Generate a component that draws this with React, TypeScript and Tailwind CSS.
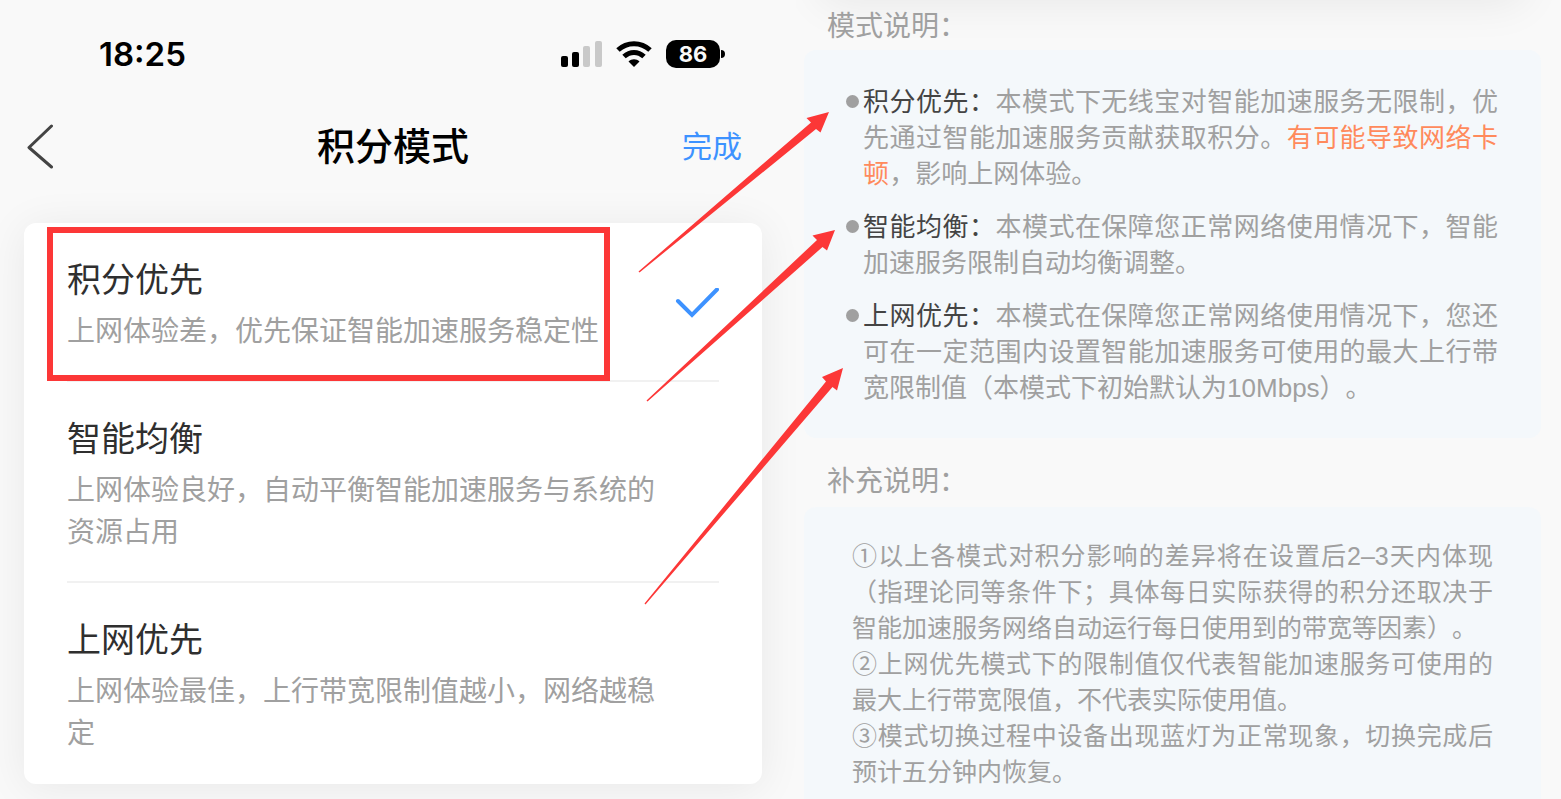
import { ReactNode, useState } from "react";

const MODES = [
  {
    id: "points",
    title: "积分优先",
    desc: "上网体验差，优先保证智能加速服务稳定性",
  },
  {
    id: "balanced",
    title: "智能均衡",
    desc: "上网体验良好，自动平衡智能加速服务与系统的资源占用",
  },
  {
    id: "network",
    title: "上网优先",
    desc: "上网体验最佳，上行带宽限制值越小，网络越稳定",
  },
];

const EXPLANATIONS: { title: string; body: ReactNode }[] = [
  {
    title: "积分优先",
    body: (
      <>
        本模式下无线宝对智能加速服务无限制，优先通过智能加速服务贡献获取积分。
        <span className="text-[#ff8a5c]">有可能导致网络卡顿</span>，影响上网体验。
      </>
    ),
  },
  {
    title: "智能均衡",
    body: "本模式在保障您正常网络使用情况下，智能加速服务限制自动均衡调整。",
  },
  {
    title: "上网优先",
    body: "本模式在保障您正常网络使用情况下，您还可在一定范围内设置智能加速服务可使用的最大上行带宽限制值（本模式下初始默认为10Mbps）。",
  },
];

const NOTES = [
  {
    mark: "①",
    text: "以上各模式对积分影响的差异将在设置后2–3天内体现（指理论同等条件下；具体每日实际获得的积分还取决于智能加速服务网络自动运行每日使用到的带宽等因素）。",
  },
  {
    mark: "②",
    text: "上网优先模式下的限制值仅代表智能加速服务可使用的最大上行带宽限值，不代表实际使用值。",
  },
  {
    mark: "③",
    text: "模式切换过程中设备出现蓝灯为正常现象，切换完成后预计五分钟内恢复。",
  },
];

function StatusBar() {
  return (
    <div className="flex h-[108px] items-center justify-between pr-[37px] pl-[75px]">
      <span className="text-[33px] leading-10 font-semibold text-black">18:25</span>
      <div className="flex items-center gap-[14px]">
        <svg width="41" height="26" viewBox="0 0 41 26" aria-hidden="true">
          <rect x="0" y="15" width="7" height="11" rx="2" fill="#000" />
          <rect x="11" y="11" width="7" height="15" rx="2" fill="#000" />
          <rect x="22" y="5" width="7" height="21" rx="2" fill="#c9c9c9" />
          <rect x="34" y="0" width="7" height="26" rx="2" fill="#c9c9c9" />
        </svg>
        <svg width="36" height="26" viewBox="0 0 36 26" fill="none" stroke="#000" aria-hidden="true">
          <path d="M2 9C11 0.500 25 0.500 34 9" strokeWidth="5" />
          <path d="M8 15.500C14 10 22 10 28 15.500" strokeWidth="5" />
          <path d="M12.500 20.500C15.500 17.500 20.500 17.500 23.500 20.500L18 26Z" fill="#000" stroke="none" />
        </svg>
        <div className="flex items-center gap-px">
          <span className="flex h-7 w-[54px] items-center justify-center rounded-[10px] bg-black text-[22px] font-bold text-[#f9f9f9]">
            86
          </span>
          <span className="h-2 w-1 rounded-r-full bg-black" />
        </div>
      </div>
    </div>
  );
}

function TitleBar() {
  return (
    <header className="grid h-[76px] grid-cols-[1fr_auto_1fr] items-center">
      <button type="button" aria-label="返回" className="justify-self-start">
        <svg width="30" height="46" viewBox="0 0 30 46" fill="none" aria-hidden="true">
          <path
            d="M27.500 3L5 24.500L27.500 44"
            stroke="#444"
            strokeWidth="3"
            strokeLinecap="round"
            strokeLinejoin="round"
          />
        </svg>
      </button>
      <h1 className="text-[38px] leading-[56px] font-medium text-black">积分模式</h1>
      <button type="button" className="justify-self-end pr-5 text-3xl leading-[44px] text-[#3d92ff]">
        完成
      </button>
    </header>
  );
}

function ModeList() {
  const [selected, setSelected] = useState("points");

  return (
    <div className="relative mt-[39px] rounded-xl bg-white px-[43px] pb-0.5 shadow-[0_4px_44px_rgba(0,0,0,0.07)]">
      <div className="divide-y-2 divide-[#f1f1f1]">
        {MODES.map((mode) => (
          <label key={mode.id} className="flex items-center justify-between pt-8 pb-7">
            <input
              type="radio"
              name="mode"
              className="sr-only"
              checked={selected === mode.id}
              onChange={() => setSelected(mode.id)}
            />
            <span className="block max-w-[600px]">
              <span className="block text-[34px] leading-[50px] text-[#2f2f2f]">{mode.title}</span>
              <span className="mt-[5px] block text-[28px] leading-[42px] text-[#a0a0a0]">{mode.desc}</span>
            </span>
            {selected === mode.id && (
              <svg width="44" height="32" viewBox="0 0 44 32" fill="none" aria-hidden="true">
                <path d="M3 13L17 27L42 1.500" stroke="#3d92ff" strokeWidth="4" strokeLinecap="round" />
              </svg>
            )}
          </label>
        ))}
      </div>
      {/* highlight around the first mode */}
      <div className="pointer-events-none absolute top-1 left-[23px] h-[154px] w-[563px] border-[6px] border-[#fc3737]" />
    </div>
  );
}

function Arrows() {
  return (
    <svg
      className="pointer-events-none absolute top-0 left-0"
      width="900"
      height="640"
      viewBox="0 0 900 640"
      fill="#fc3737"
      aria-hidden="true"
    >
      <path d="M638.500 271.500L811 122.500L806.500 118L829 112L820.500 132.500L816 129L639.500 272.500Z" />
      <path d="M646.500 400.500L817 240L812.500 235.500L835 230L827 250.500L822.500 247L647.500 401.500Z" />
      <path d="M644.500 603.500L826 381.500L822 377L843 368L837 390.500L832.500 387L645.500 604.500Z" />
    </svg>
  );
}

export default function App() {
  return (
    <main className="relative grid min-h-screen grid-cols-[51fr_49fr] bg-[#f9f9f9] font-['Inter','Noto_Sans_CJK_SC',sans-serif] [text-spacing-trim:space-all]">
      <section className="pr-[34px] pl-6">
        <StatusBar />
        <TitleBar />
        <ModeList />
      </section>

      <section className="flex flex-col overflow-hidden pr-5 pl-2 font-['Liberation_Sans','Noto_Sans_CJK_SC',sans-serif] text-[#a0a0a0]">
        {/* bottom edge of the card scrolled out above */}
        <div className="mx-4 -mt-16 h-16 shrink-0 rounded-xl bg-white shadow-[0_4px_44px_rgba(0,0,0,0.07)]" />
        <h2 className="h-[50px] pt-[6px] pl-[23px] text-[28px] leading-[42px]">模式说明：</h2>
        <ul className="relative flex flex-col gap-[17px] rounded-xl bg-[#f4f8fb] pt-[34px] pr-[43px] pb-8 pl-[42px] text-[26px] leading-9">
          {EXPLANATIONS.map((item) => (
            <li key={item.title} className="flex text-justify">
              <span className="mt-[11px] mr-1 h-[13px] w-[13px] shrink-0 rounded-full bg-[#a0a0a0]" />
              <p>
                <span className="text-[#444]">{item.title}：</span>
                {item.body}
              </p>
            </li>
          ))}
        </ul>
        <h2 className="mt-[23px] mb-1 pl-[23px] text-[28px] leading-[42px]">补充说明：</h2>
        <div className="grow rounded-t-xl bg-[#f4f8fb] pt-[31px] pr-12 pl-12 text-justify text-[25px] leading-9">
          {NOTES.map((note) => (
            <p key={note.mark}>
              <span className="font-['Noto_Sans_CJK_SC',sans-serif] leading-none">{note.mark}</span>
              {note.text}
            </p>
          ))}
        </div>
      </section>

      <Arrows />
    </main>
  );
}
